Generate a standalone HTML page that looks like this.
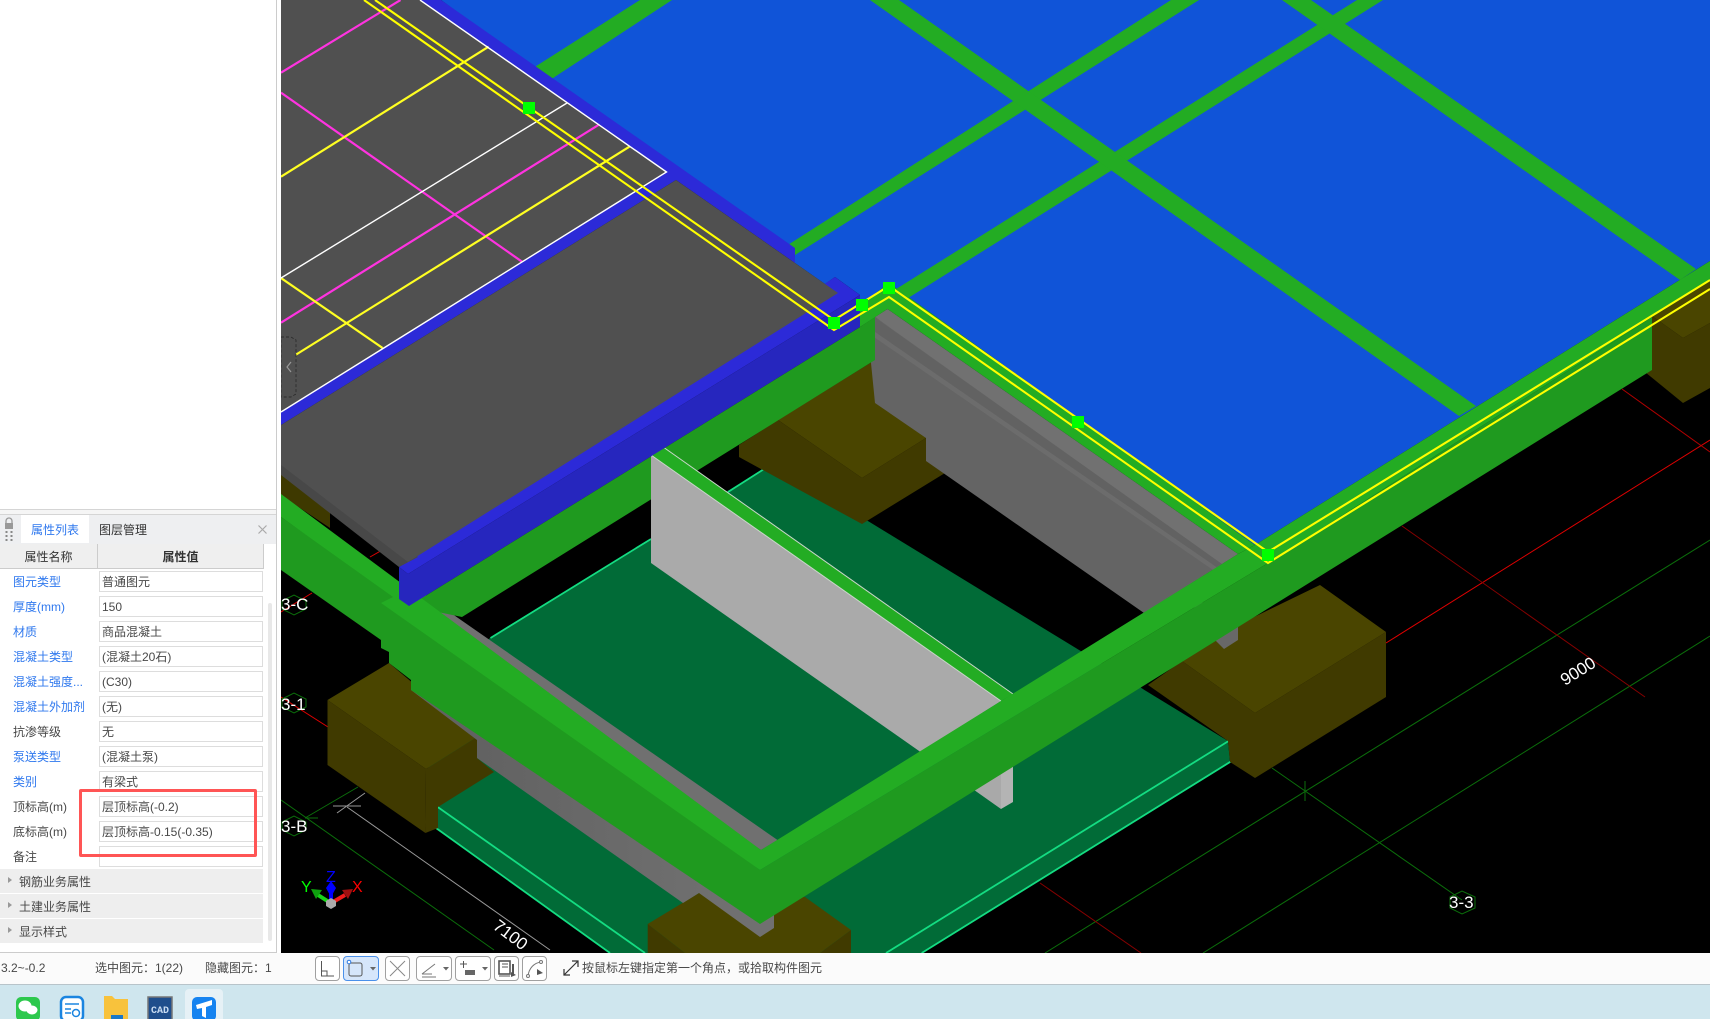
<!DOCTYPE html>
<html><head><meta charset="utf-8"><style>
html,body{margin:0;padding:0;background:#fff}
#r{position:relative;width:1710px;height:1019px;overflow:hidden;font:12px/16px "Liberation Sans","Noto Sans CJK SC",sans-serif;color:#484848}
#r div,#r svg{position:absolute}
.l{left:13px;white-space:nowrap;width:84px}.b{color:#2f78ee}
.v{left:99px;width:160px;height:19px;border:1px solid #ddd;padding-left:2px;line-height:20px;white-space:nowrap;background:#fff;box-sizing:content-box}
.s{left:0;width:263px;height:24px;background:#eeeeee;line-height:26px;text-indent:19px}
.s i{position:absolute;left:8px;top:8px;border-left:4px solid #999;border-top:3px solid transparent;border-bottom:3px solid transparent}
.bt{height:23px;top:956px;border:1px solid #a0a0a0;border-radius:4px;box-sizing:content-box;background:#fff}
</style></head><body><div id="r">
<svg style="left:281px;top:0" width="1429" height="953" viewBox="281 0 1429 953" font-family="Liberation Sans,sans-serif">
<defs><linearGradient id="g" gradientUnits="userSpaceOnUse" x1="480" y1="0" x2="720" y2="0"><stop offset="0" stop-color="#626262"/><stop offset="1" stop-color="#707070"/></linearGradient></defs>
<rect x="281" y="0" width="1429" height="953" fill="#000"/>
<g fill="none" stroke-width="1">
<path d="M1045 953L1710 540M1203 953L1710 636M1272 768L1462 900M281 800L494 950M305 818L358 787M305 818H318M1305 781V801" stroke="#0b6e0b"/>
<path d="M1386 643L1710 440M281 612L312 593M281 697L328 727M370 557L391 545" stroke="#e00000"/>
<path d="M1402 526L1645 697M1040 883L1141 953" stroke="#860000"/><path d="M1622 389L1710 452" stroke="#b00000"/>
<path d="M347 807L550 950M333 806H361M337 813L365 793" stroke="#999"/>
<path d="M282 601l12-6 12 6v8l-12 6-12-6zM282 699l12-6 12 6v8l-12 6-12-6zM282 822l12-6 12 6v8l-12 6-12-6zM1450 897l12-6 13 6v11l-13 6-12-6z" stroke="#0b6e0b"/>
</g>
<polygon fill="#1054d8" points="400,0 1710,0 1710,261 1255,545 889,283 860,305 860,295 835,277 825,284 795,263 700,190 441,0"/>
<g fill="#23ac23">
<polygon points="885,296 1357,0 1383,0 905,300"/><polygon points="780,250 1171,0 1199,0 795,255"/><polygon points="530,70 640,0 672,0 550,80"/>
<polygon points="870,0 1459,416 1476,406 899,0"/><polygon points="1282,0 1680,280 1696,269 1311,0"/>
</g>
<polygon fill="#016b37" points="490,638 773,463 1228,741 1230,762 922,953 610,953 436,828 420,700"/>
<path d="M490.5 638L651 539M728 492L773.5 463M437.7 807L645 953M436 828L610 953M886 953L1228.6 741M921.7 953L1230.5 761.7" stroke="#14dc82" stroke-width="1.8" fill="none"/>
<!-- olive boxes -->
<polygon fill="#4a4500" points="875,360 926,438 862,478 778,420"/>
<polygon fill="#403a00" points="739,445 778,420 862,478 862,524 739,457"/>
<polygon fill="#403a00" points="862,478 926,438 926,460 945,473 862,524"/>
<polygon fill="#4a4500" points="327.5,700 389,663 477,737 426,769"/>
<polygon fill="#403a00" points="327.5,700 426,769 425.4,833 327.5,765"/>
<polygon fill="#403a00" points="426,769 477,737 477,758 494,772 438,807 438,828 425.4,833"/>
<polygon fill="#3e3900" points="281,466 330,500 330,528 300,508 281,495"/>
<polygon fill="#4a4500" points="647.7,924 699,893 805,897 851,930 820,953 685,953"/>
<polygon fill="#403a00" points="647.7,924 685,953 647.7,953"/>
<polygon fill="#403a00" points="851,930 820,953 851,953"/>
<polygon fill="#4a4500" points="1182,661 1255,713 1386,632 1320,585 1250,619"/>
<polygon fill="#403a00" points="1148,685 1182,661 1255,713 1255,778 1230,762 1228,741"/>
<polygon fill="#403a00" points="1255,713 1386,632 1386,697 1255,778"/>
<polygon fill="#4a4500" points="1652,316 1710,281 1710,323 1683,338"/>
<polygon fill="#403a00" points="1645,372 1652,366 1652,316 1683,338 1683,403"/>
<polygon fill="#403a00" points="1683,338 1710,323 1710,388 1683,403"/>
<!-- gray walls -->
<polygon fill="#646464" points="875,317 1238,554 1144,613 926,461 926,438 875,403 868,333 868,327"/>
<polygon fill="#6c6c6c" points="868,327 1218,568 1213,570 868,333"/>
<polygon fill="#626262" points="875,318 1222,564 1218,568 868,327"/>
<polygon fill="#717171" points="887.5,309 1238,554 1222,564 875,317"/>
<polygon fill="#686868" points="1190,600 1215,640 1224,649 1238,640 1238,610"/>
<polygon fill="url(#g)" points="411,680 411,690 477,740 477,758 683,903 699,893 760,937 774,928 774,900 500,690 430,660"/>
<polygon fill="#707070" points="425,595 777.5,840 761,850 395,600"/>
<!-- green beams -->
<polygon fill="#1f9a1f" points="409,606 860,327 875,317 875,360 462,617"/>
<polygon fill="#23ac23" points="860,305 889,283 1255,545 1238,554 887.5,309 860,327"/>
<!-- light wall -->
<polygon fill="#aaaaaa" points="651,455 1001,701 920.5,752 651,563"/>
<polygon fill="#23ac23" points="651,455 664.6,448 1013,694 1001,701"/>
<path d="M664.6 448L1013 694M651 455L1001 701" stroke="#c9d6c9" stroke-width="1" fill="none"/>
<polygon fill="#a9a9a9" points="960,780 1001,809 1001,760 975,760"/>
<polygon fill="#b4b4b4" points="1001,809 1013,802 1013,760 1001,760"/>
<!-- front beams -->
<polygon fill="#1f9a1f" points="281,517 400,600 760,870 760,924 411,690 411,680 389,663 389,652 381,648 381,640 281,570"/>
<polygon fill="#1f9a1f" points="760,870 1268,563 1652,317 1652,370 760,924"/>
<polygon fill="#23ac23" points="281,494 761,850 1238,554 1255,545 1710,261 1710,281 1652,317 1268,563 760,870 381,603 393,597 281,517"/>
<!-- gray slab & indigo -->
<polygon fill="#2c2ad8" points="420,0 441,0 795,248 795,263 676,180 281,425 281,412 666,172"/>
<polygon fill="#2c2ad8" points="399,567 835,277 860,295 408,574"/>
<polygon fill="#2626be" points="408,574 860,295 860,327 409,606 399,599 399,567"/>
<polygon fill="#484848" points="281,461 418,557 399,567 281,475"/>
<polygon fill="#505050" points="281,425 676,180 838,293 408,562 281,465"/>
<polygon fill="#505050" points="281,0 420,0 666.5,172 281,412"/>
<g fill="none" stroke-width="2.2">
<path d="M400.5 0L281 72.7M281 92.7L522 261.7M598.4 125L281 322.7" stroke="#ff33e0"/>
<path d="M488.6 46.7L281 176.7M629.4 146.7L281 364M281 278L382.6 348" stroke="#ffff22"/>
<path d="M567 103L281 278" stroke="#fff" stroke-width="1.4"/>
<path d="M420 0L666.5 172L281 412" stroke="#fff" stroke-width="1.4"/>
<path d="M364 0L834 330L889 297L1268 563L1710 289M375 0L834 320L889 286L1268 552L1710 280" stroke="#ffff00" stroke-width="2.1"/>
</g>
<g fill="#00ff00">
<rect x="523" y="102" width="12" height="12"/><rect x="828" y="317" width="12" height="12"/><rect x="856" y="299" width="12" height="12"/><rect x="883" y="282" width="12" height="12"/><rect x="1072" y="416" width="12" height="12"/><rect x="1262" y="549" width="12" height="12"/>
</g>
<path d="M281 337h10l5 3v54l-5 3h-10z" fill="#505050" stroke="#222" stroke-dasharray="3 2" stroke-width=".7"/>
<path d="M291 362l-4 5 4 5" fill="none" stroke="#999" stroke-width="1.2"/>
<g fill="#fff" font-size="17">
<text x="281" y="610">3-C</text><text x="281" y="710">3-1</text><text x="281" y="832">3-B</text>
<text x="1449" y="908">3-3</text>
<text transform="translate(1565 686) rotate(-32)" font-size="17">9000</text>
<text transform="translate(492 928) rotate(37)" font-size="17">7100</text>
<text x="1112" y="963" font-size="15">9</text>
</g>
<!-- gizmo -->
<text x="301" y="892" fill="#00ff00" font-size="16">Y</text><text x="326" y="882" fill="#0000ff" font-size="16">Z</text><text x="352" y="892" fill="#ff0000" font-size="16">X</text>
<path d="M329 902L318 895" stroke="#19d519" stroke-width="4"/><polygon points="311,889 322,890 316,899" fill="#0fa00f"/>
<path d="M333 902L345 895" stroke="#f01c1c" stroke-width="4"/><polygon points="353,889 342,890 348,899" fill="#a01010"/>
<path d="M331 903V888" stroke="#0000ff" stroke-width="4"/><polygon points="331,881 336,888 331,897 326,888" fill="#0000ff"/>
<polygon points="331,898 336,901 336,906 331,909 326,906 326,901" fill="#aaa"/>
</svg>

<!-- panel -->
<div style="left:0;top:0;width:277px;height:953px;background:#fff;border-right:1px solid #ccc;box-sizing:border-box"></div>
<div style="left:0;top:509px;width:276px;height:6px;background:#f5f5f5;border-top:1px solid #d5d5d5;border-bottom:1px solid #d5d5d5;box-sizing:border-box"></div>
<div style="left:0;top:515px;width:276px;height:29px;background:#eeeff1"></div>
<div style="left:21px;top:515px;width:68px;height:28px;background:#fff;color:#2f78ee;text-align:center;line-height:30px">属性列表</div>
<div style="left:99px;top:515px;line-height:30px;color:#333">图层管理</div>
<svg style="left:4px;top:517px" width="10" height="24"><path d="M2 6V4a3 3 0 016 0v2" fill="none" stroke="#999" stroke-width="1.3"/><rect x="1" y="6" width="8" height="6" fill="#999"/><g fill="#888"><rect x="1.5" y="14" width="2" height="2"/><rect x="6.5" y="14" width="2" height="2"/><rect x="1.5" y="18" width="2" height="2"/><rect x="6.5" y="18" width="2" height="2"/><rect x="1.5" y="22" width="2" height="2"/><rect x="6.5" y="22" width="2" height="2"/></g></svg>
<svg style="left:258px;top:525px" width="9" height="9"><path d="M.5.5l8 8M8.5.5l-8 8" stroke="#aaa" stroke-width="1.2"/></svg>
<div style="left:0;top:544px;width:98px;height:25px;background:#efefef;border-right:1px solid #ccc;border-bottom:1px solid #ccc;text-align:center;line-height:27px;box-sizing:border-box;color:#333">属性名称</div>
<div style="left:98px;top:544px;width:166px;height:25px;background:#efefef;border-right:1px solid #ccc;border-bottom:1px solid #ccc;text-align:center;line-height:27px;font-weight:bold;box-sizing:border-box;color:#333">属性值</div>

<div class="l b" style="top:574px">图元类型</div><div class="v" style="top:571px">普通图元</div>
<div class="l b" style="top:599px">厚度(mm)</div><div class="v" style="top:596px">150</div>
<div class="l b" style="top:624px">材质</div><div class="v" style="top:621px">商品混凝土</div>
<div class="l b" style="top:649px">混凝土类型</div><div class="v" style="top:646px">(混凝土20石)</div>
<div class="l b" style="top:674px">混凝土强度...</div><div class="v" style="top:671px">(C30)</div>
<div class="l b" style="top:699px">混凝土外加剂</div><div class="v" style="top:696px">(无)</div>
<div class="l" style="top:724px">抗渗等级</div><div class="v" style="top:721px">无</div>
<div class="l b" style="top:749px">泵送类型</div><div class="v" style="top:746px">(混凝土泵)</div>
<div class="l b" style="top:774px">类别</div><div class="v" style="top:771px">有梁式</div>
<div class="l" style="top:799px">顶标高(m)</div><div class="v" style="top:796px">层顶标高(-0.2)</div>
<div class="l" style="top:824px">底标高(m)</div><div class="v" style="top:821px">层顶标高-0.15(-0.35)</div>
<div class="l" style="top:849px">备注</div><div class="v" style="top:846px"></div>
<div class="s" style="top:869px"><i></i>钢筋业务属性</div>
<div class="s" style="top:894px"><i></i>土建业务属性</div>
<div class="s" style="top:919px"><i></i>显示样式</div>
<div style="left:268px;top:603px;width:4px;height:338px;background:#e8e8e8;border-radius:2px"></div>
<div style="left:78.5px;top:789px;width:178px;height:68px;border:3px solid #ff5555;border-radius:2px;box-sizing:border-box"></div>
<div style="left:0;top:952px;width:277px;height:1px;background:#ccc"></div>

<!-- status bar -->
<div style="left:0;top:953px;width:1710px;height:32px;background:#fbfbfb;border-bottom:1px solid #b8c4ca;box-sizing:border-box"></div>
<div style="left:1px;top:960px">3.2~-0.2</div>
<div style="left:95px;top:960px">选中图元：1(22)</div>
<div style="left:205px;top:960px">隐藏图元：1</div>
<div class="bt" style="left:315px;width:23px"><svg width="24" height="24" style="left:0;top:0"><path d="M5.500 4v15H18M5.500 14H11V19" fill="none" stroke="#555"/></svg></div>
<div class="bt" style="left:343px;width:34px;background:#d6e6fb;border-color:#4a90ea"><svg width="35" height="24" style="left:0;top:0"><rect x="5" y="6" width="13" height="13" rx="2" fill="none" stroke="#555"/><circle cx="5" cy="5" r="1.8" fill="#fff" stroke="#2b78e0"/><path d="M26 10h6l-3 3.500z" fill="#666"/></svg></div>
<div class="bt" style="left:385px;width:23px"><svg width="24" height="24" style="left:0;top:0"><path d="M4 4l15 15M19 4L4 19" stroke="#888" fill="none"/></svg></div>
<div class="bt" style="left:416px;width:34px"><svg width="35" height="24" style="left:0;top:0"><path d="M5 17L18 7M5 17H15" stroke="#777" fill="none"/><path d="M5 20H19" stroke="#bbb" stroke-width="2"/><path d="M26 10h6l-3 3.500z" fill="#666"/></svg></div>
<div class="bt" style="left:455px;width:34px"><svg width="35" height="24" style="left:0;top:0"><path d="M4 7h7M7.500 4v7" stroke="#555" fill="none"/><rect x="9" y="13" width="10" height="5" fill="#666"/><path d="M26 10h6l-3 3.500z" fill="#666"/></svg></div>
<div class="bt" style="left:494px;width:23px"><svg width="24" height="24" style="left:0;top:0"><rect x="4" y="4" width="11" height="13" fill="#fff" stroke="#555" stroke-width="1.6"/><path d="M7 7h6M7 10h6M4 19h11" stroke="#555"/><path d="M17 7h2v10h-2M16 15l5 3-5 2z" fill="#555"/></svg></div>
<div class="bt" style="left:522px;width:23px"><svg width="24" height="24" style="left:0;top:0"><path d="M5 19C6 11 11 6 18 5" fill="none" stroke="#777"/><circle cx="5" cy="19" r="1.500" fill="#fff" stroke="#777"/><circle cx="18" cy="5" r="1.500" fill="#fff" stroke="#777"/><path d="M14 12l6 4-6 2z" fill="#555"/></svg></div>
<svg style="left:563px;top:960px" width="16" height="16"><path d="M1 15L15 1M9 1h6v6M1 9v6h6" fill="none" stroke="#333" stroke-width="1.2"/></svg>
<div style="left:582px;top:960px;white-space:nowrap">按鼠标左键指定第一个角点，或拾取构件图元</div>

<!-- taskbar -->
<div style="left:0;top:985px;width:1710px;height:34px;background:#cfe6ee"></div>
<div style="left:185px;top:989px;width:38px;height:30px;background:#e6f1f6;border-radius:4px 4px 0 0"></div>
<svg style="left:0;top:984px" width="240" height="35">
<rect x="16" y="13" width="24" height="24" rx="5" fill="#2dc84d"/><ellipse cx="25" cy="22" rx="6.500" ry="5.500" fill="#fff"/><ellipse cx="32" cy="26" rx="5.500" ry="4.500" fill="#fff"/>
<rect x="61" y="13" width="22" height="24" rx="5" fill="#fff" stroke="#1b85e0" stroke-width="2.500"/><path d="M65 20h14M65 25h6M65 29h6" stroke="#1b85e0" stroke-width="1.500"/><circle cx="76" cy="29" r="3.500" fill="none" stroke="#1b85e0" stroke-width="1.500"/>
<path d="M104 12h8l3 3h13v22h-24z" fill="#f8c23c"/><rect x="111" y="31" width="12" height="6" fill="#1b78c8"/>
<rect x="148" y="13" width="24" height="24" fill="#1f4e8c" stroke="#777" stroke-width="1.500"/><text x="151" y="29" font-size="10" font-weight="bold" fill="#c9dcf2" font-family="Liberation Mono,monospace">CAD</text>
<rect x="192" y="13" width="24" height="24" rx="5" fill="#1583f0"/><path d="M196 21L212 16V21L206 23V34L202 32V24L197 25z" fill="#fff"/>
</svg>
</div></body></html>
